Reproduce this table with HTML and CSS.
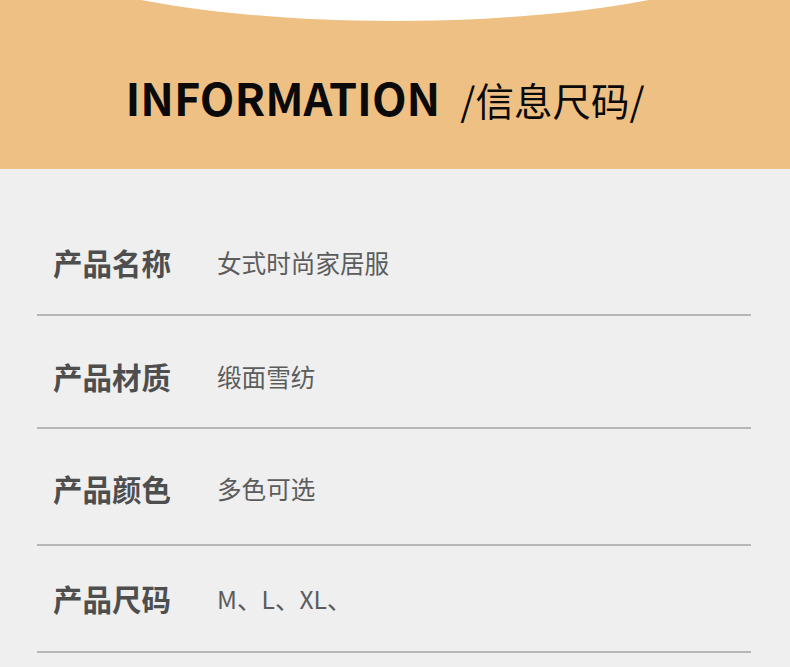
FILE: index.html
```html
<!DOCTYPE html>
<html lang="zh">
<head>
<meta charset="utf-8">
<link rel="stylesheet" href="styles.css">
</head>
<body>
<header class="hero">
  <div class="arc"></div>
  <h1 class="title"><span class="title-en">INFORMATION</span><span class="title-cn">/信息尺码/</span></h1>
</header>
<main class="info">
  <div class="row row-1"><span class="label">产品名称</span><span class="value">女式时尚家居服</span></div>
  <div class="row row-2"><span class="label">产品材质</span><span class="value">缎面雪纺</span></div>
  <div class="row row-3"><span class="label">产品颜色</span><span class="value">多色可选</span></div>
  <div class="row row-4"><span class="label">产品尺码</span><span class="value">M、L、XL、</span></div>
</main>
</body>
</html>
```
FILE: styles.css
```css
html, body {
  margin: 0;
  padding: 0;
}
body {
  width: 790px;
  height: 667px;
  overflow: hidden;
  background: #efefef;
  font-family: "Noto Sans CJK SC", "Noto Sans", sans-serif;
}
.hero {
  position: relative;
  height: 169px;
  background: #efc084;
  overflow: hidden;
  display: flex;
  align-items: flex-start;
  justify-content: center;
}
.arc {
  position: absolute;
  left: -5px;
  top: -163px;
  width: 800px;
  height: 184px;
  border-radius: 50%;
  background: #ffffff;
}
.title {
  position: relative;
  margin: 0 0 0 -20px;
  padding-top: 74px;
  display: flex;
  align-items: baseline;
  color: #0a0a0a;
  line-height: 1;
}
.title-en {
  font-size: 45px;
  font-weight: 700;
}
.title-cn {
  margin-left: 20px;
  font-size: 38.5px;
  font-weight: 400;
}
.info {
  margin: 0 39px 0 37px;
  padding-top: 32px;
}
.row {
  display: flex;
  align-items: center;
  border-bottom: 2px solid #b6b6b6;
  box-sizing: border-box;
  padding-left: 16px;
}
.row-1 { height: 115px; padding-top: 8px; }
.row-2 { height: 113px; padding-top: 8px; }
.row-3 { height: 117px; padding-top: 2px; }
.row-4 { height: 107px; padding-bottom: 2px; }
.label {
  font-size: 29.5px;
  font-weight: 700;
  color: #4e4e4e;
  width: 164px;
}
.value {
  font-size: 24.6px;
  font-weight: 400;
  color: #5c5c5c;
}
```
